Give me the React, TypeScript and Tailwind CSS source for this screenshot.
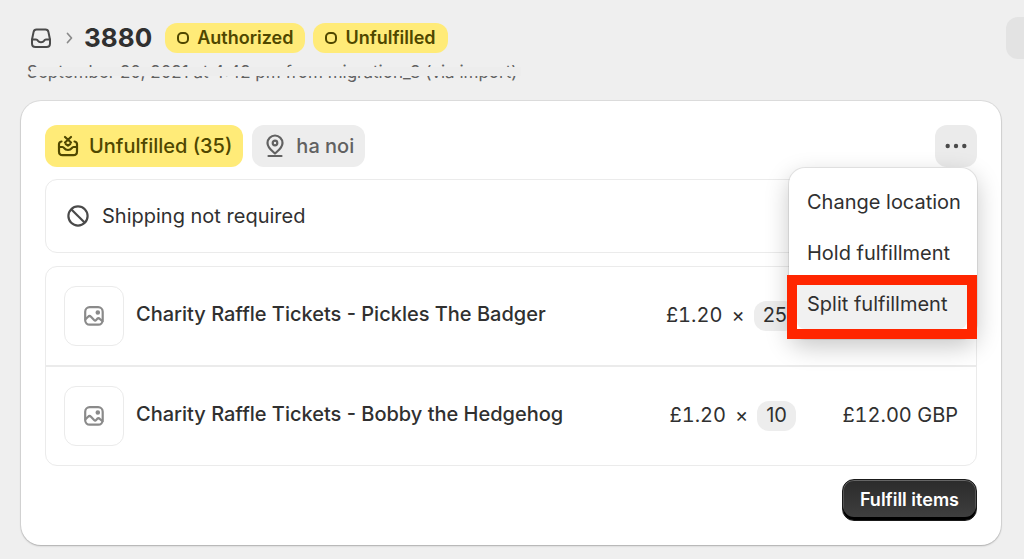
import type { ReactNode } from "react";

type LineItem = {
  name: string;
  price: string;
  quantity: number;
  total?: string;
};

const lineItems: LineItem[] = [
  {
    name: "Charity Raffle Tickets - Pickles The Badger",
    price: "£1.20",
    quantity: 25,
  },
  {
    name: "Charity Raffle Tickets - Bobby the Hedgehog",
    price: "£1.20",
    quantity: 10,
    total: "£12.00 GBP",
  },
];

function InboxIcon() {
  return (
    <svg className="size-6" fill="none" stroke="currentColor" strokeLinecap="round" strokeLinejoin="round" strokeWidth="2" viewBox="0 0 24 24">
      <path d="M7.500 3.500h9c1.500 0 2.600.9 2.900 2.400L21 13.500V17.500C21 19.700 19.700 21 17.500 21H6.500C4.300 21 3 19.700 3 17.500V13.500L4.600 5.900C4.900 4.400 6 3.500 7.500 3.500Z" />
      <path d="M3.200 13.500h3.900c.8 0 1.300.4 1.700 1.100.7 1.100 1.700 1.700 3.200 1.700s2.500-.6 3.200-1.700c.4-.7.9-1.100 1.700-1.100h3.900" />
    </svg>
  );
}

function ChevronIcon() {
  return (
    <svg className="h-3 w-2" fill="none" stroke="currentColor" strokeLinecap="round" strokeLinejoin="round" strokeWidth="1.700" viewBox="0 0 8 12">
      <path d="M2.500 1.500 6.500 6 2.500 10.500" />
    </svg>
  );
}

function UnfulfilledIcon() {
  return (
    <svg className="size-6" fill="none" stroke="currentColor" strokeLinecap="round" strokeLinejoin="round" strokeWidth="2.200" viewBox="0 0 24 24">
      <path d="m9 3 6 5.500M15 3 9 8.500" />
      <path d="M5.500 7.500C3.700 7.800 3 8.700 3 10.300V17.500C3 20 4.200 21.200 6.700 21.200H17.300C19.800 21.200 21 20 21 17.500V10.300C21 8.700 20.300 7.800 18.500 7.500" />
      <path d="M3 13h3.500c.9 0 1.300.5 1.700 1.100.8 1.200 2 1.900 3.800 1.900s3-.7 3.800-1.900c.4-.6.800-1.100 1.700-1.100H21" />
      <path d="m9.800 10.200 2.200 1.500 2.200-1.500" />
    </svg>
  );
}

function LocationIcon() {
  return (
    <svg className="size-6" fill="none" stroke="currentColor" strokeLinecap="round" strokeLinejoin="round" strokeWidth="2.200" viewBox="0 0 24 24">
      <path d="M12 19.500C9.500 17.200 4.500 14 4.500 9a7.500 7.500 0 0 1 15 0c0 5-5 8.200-7.500 10.500Z" />
      <circle cx="12" cy="9" r="2.300" />
      <path d="M5.500 22h13" />
    </svg>
  );
}

function BlockedIcon() {
  return (
    <svg className="size-6" fill="none" stroke="currentColor" strokeWidth="2.200" viewBox="0 0 24 24">
      <circle cx="12" cy="12" r="9.600" />
      <path d="m5.200 5.200 13.600 13.600" />
    </svg>
  );
}

function ImageIcon() {
  return (
    <svg className="size-6" fill="none" stroke="currentColor" strokeLinecap="round" strokeLinejoin="round" strokeWidth="2.200" viewBox="0 0 24 24">
      <rect height="17.500" rx="4.500" width="17.500" x="3.200" y="3.200" />
      <path d="m3.500 15.200 2.600-2.500c.9-.9 2-.9 2.900 0l3.100 3.300c.7.700 1.400.7 2 0l1-1.100c.8-.8 1.900-.8 2.700 0l2.700 2.400" />
      <circle cx="15.800" cy="8.500" fill="currentColor" r="1.200" />
    </svg>
  );
}

function MoreIcon() {
  return (
    <svg className="size-6" fill="currentColor" viewBox="0 0 24 24">
      <circle cx="3.700" cy="12" r="2.200" />
      <circle cx="12" cy="12" r="2.200" />
      <circle cx="20.300" cy="12" r="2.200" />
    </svg>
  );
}

function StatusBadge({ children }: { children: ReactNode }) {
  return (
    <span className="flex h-[30px] items-center gap-2 rounded-xl bg-[#ffeb78] px-3 text-lg font-semibold text-[#4f4700]">
      <svg className="size-3" fill="none" stroke="currentColor" strokeWidth="2" viewBox="0 0 12 12">
        <rect height="10" rx="4" width="10" x="1" y="1" />
      </svg>
      {children}
    </span>
  );
}

function OrderHeader() {
  return (
    <header className="pl-[27px]">
      <div className="flex items-center justify-between">
        <div className="flex items-center">
          <a aria-label="Orders" className="pl-0.5 text-[#4a4a4a]" href="#orders">
            <InboxIcon />
          </a>
          <span className="ml-3 mr-[11px] text-[#8a8a8a]">
            <ChevronIcon />
          </span>
          <h1 className="text-[26px] font-bold leading-9 text-[#303030]">3880</h1>
          <div className="ml-[13px] flex gap-2">
            <StatusBadge>Authorized</StatusBadge>
            <StatusBadge>Unfulfilled</StatusBadge>
          </div>
        </div>
        <button aria-label="More order actions" className="-mr-6 size-[42px] rounded-xl bg-[#e3e3e3]" type="button" />
      </div>
      <div className="relative mt-px w-fit text-[17px] leading-6 text-[#616161]">
        September 20, 2021 at 4:42 pm from migration_3 (via import)
        <span className="absolute -right-1 left-1 top-[7px] h-[9px] bg-[#ededed]" />
      </div>
    </header>
  );
}

function ActionMenu() {
  return (
    <div
      className="absolute right-0 top-full z-10 mt-px w-[188px] rounded-2xl bg-white pt-2 shadow-[0_0_0_1px_rgba(0,0,0,0.08),0_8px_24px_rgba(0,0,0,0.22)]"
      role="menu"
    >
      <button className="block h-[51px] w-full whitespace-nowrap px-[18px] text-left" role="menuitem" type="button">
        Change location
      </button>
      <button className="block h-[51px] w-full whitespace-nowrap px-[18px] text-left" role="menuitem" type="button">
        Hold fulfillment
      </button>
      <div className="-ml-0.5 -mt-[3px] border-[10px] border-[#ff2600] bg-white">
        <button className="block h-11 w-full whitespace-nowrap rounded-b-lg bg-[#f1f1f1] px-2.5 pb-1.5 text-left" role="menuitem" type="button">
          Split fulfillment
        </button>
      </div>
    </div>
  );
}

function LineItemRow({ item }: { item: LineItem }) {
  return (
    <tr className="border-t-2 border-[#ebebeb] first:border-t-0">
      <td className="w-[78px] py-[19px] pl-[18px]">
        <span className="flex size-[60px] items-center justify-center rounded-xl border border-[#ebebeb] text-[#8a8a8a]">
          <ImageIcon />
        </span>
      </td>
      <td className="pb-1 pl-3 font-medium">{item.name}</td>
      <td className="whitespace-nowrap">
        <span className="flex h-[30px] items-start justify-end leading-7">
          <span className="tabular-nums">{item.price}</span>
          <span className="mx-[9px]">×</span>
          <span className="h-[30px] rounded-xl bg-[#ededed] px-[9px]">{item.quantity}</span>
        </span>
      </td>
      <td className="w-[180px] whitespace-nowrap pb-0.5 pr-[18px] text-right tabular-nums">{item.total}</td>
    </tr>
  );
}

export default function App() {
  return (
    <main className="min-h-screen overflow-hidden bg-[#efefef] pt-[17px] font-['Inter',sans-serif] text-xl text-[#303030]">
      <OrderHeader />

      <section className="ml-[21px] mr-[23px] mt-[17px] rounded-[20px] bg-white p-6 shadow-[0_0_0_1px_rgba(0,0,0,0.07),0_1px_2px_rgba(0,0,0,0.22)]">
        <div className="flex items-center justify-between">
          <div className="flex gap-[9px] font-medium">
            <span className="flex h-[42px] items-center gap-[9px] rounded-xl bg-[#ffeb78] px-[11px] text-[#4f4700]">
              <UnfulfilledIcon />
              Unfulfilled (35)
            </span>
            <span className="flex h-[42px] items-center gap-[9px] rounded-xl bg-[#ededed] px-[11px] text-[#616161]">
              <LocationIcon />
              ha noi
            </span>
          </div>
          <div className="relative">
            <button aria-label="Fulfillment actions" className="flex size-[42px] items-center justify-center rounded-xl bg-[#ebebeb] text-[#4a4a4a]" type="button">
              <MoreIcon />
            </button>
            <ActionMenu />
          </div>
        </div>

        <div className="mt-3 flex h-[74px] items-center gap-3 rounded-xl border border-[#ebebeb] px-5">
          <span className="text-[#4a4a4a]">
            <BlockedIcon />
          </span>
          Shipping not required
        </div>

        <div className="mt-[13px] overflow-hidden rounded-xl border border-[#ebebeb]">
          <table className="w-full border-collapse">
            <tbody>
              {lineItems.map((item) => (
                <LineItemRow item={item} key={item.name} />
              ))}
            </tbody>
          </table>
        </div>

        <div className="mt-[13px] flex justify-end">
          <button
            className="h-[42px] rounded-xl border border-[#1a1a1a] bg-linear-to-b from-[#2b2b2b] to-[#404040] px-[17px] text-lg font-semibold text-white shadow-[inset_0_-3px_0_#000,inset_0_1px_0_#666,inset_1px_0_0_#555,inset_-1px_0_0_#555]"
            type="button"
          >
            Fulfill items
          </button>
        </div>
      </section>
    </main>
  );
}
